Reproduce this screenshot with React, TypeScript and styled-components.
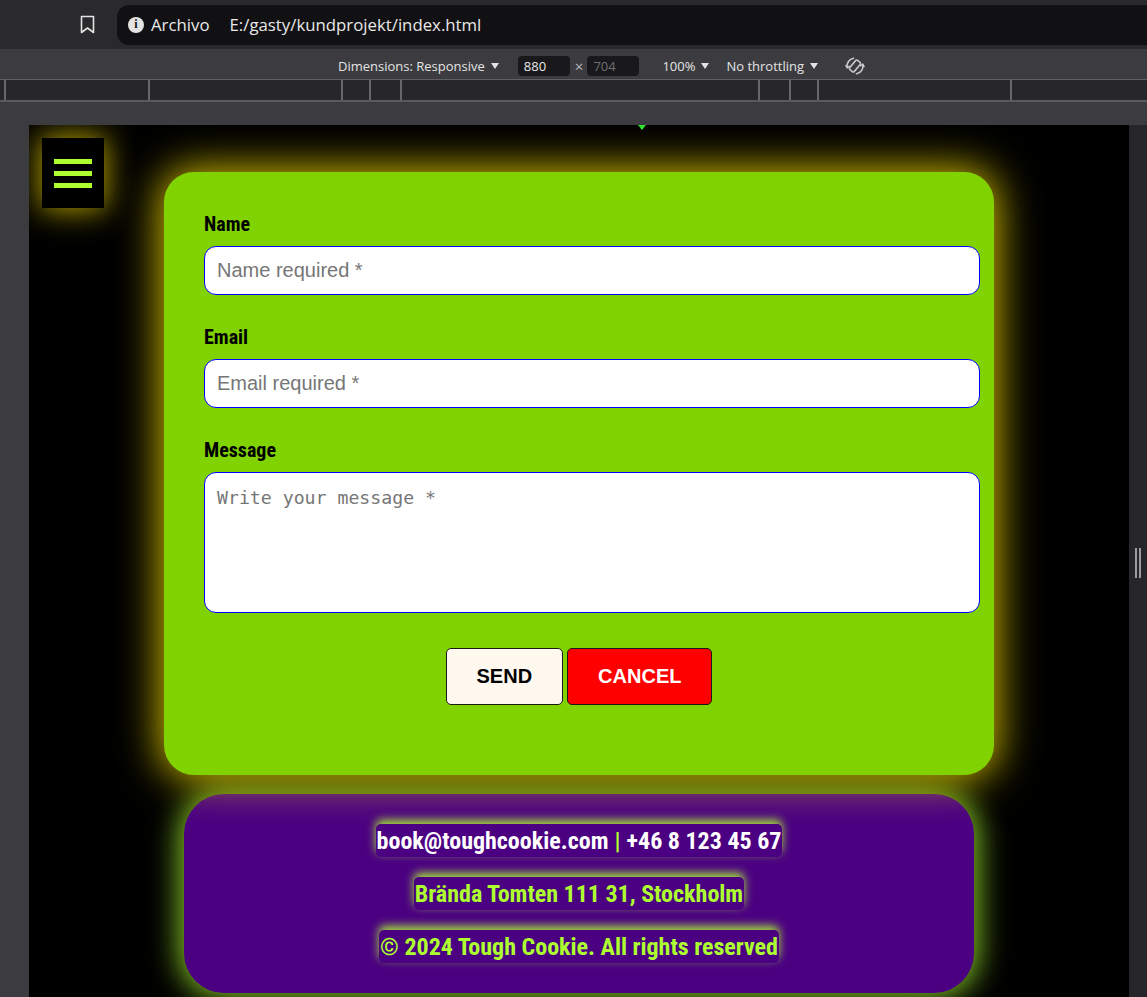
import React from 'react';
import styled, { createGlobalStyle } from 'styled-components';

const GlobalStyle = createGlobalStyle`
  html, body {
    margin: 0;
    padding: 0;
    height: 100%;
    overflow: hidden;
    background: #3c3c40;
  }
  * {
    box-sizing: border-box;
  }
`;

const Shell = styled.div`
  display: flex;
  flex-direction: column;
  height: 100vh;
  font-family: "Open Sans", "Noto Sans", sans-serif;
`;

/* ---------- browser chrome ---------- */

const TopBar = styled.div`
  height: 49px;
  background: #2a2a2d;
  display: flex;
  align-items: center;
  padding-left: 79px;
  gap: 22px;
`;

const IconButton = styled.div`
  width: 16px;
  height: 20px;
  display: flex;
  align-items: center;
  justify-content: center;
  color: #e3e3e3;
`;

const AddressBar = styled.div`
  flex: 1;
  height: 40px;
  background: #111113;
  border-radius: 12px 0 0 12px;
  display: flex;
  align-items: center;
  padding-left: 11px;
  color: #e8e8e8;
  font-size: 16.8px;
`;

const InfoDot = styled.span`
  width: 16px;
  height: 16px;
  border-radius: 50%;
  background: #e3e3e3;
  color: #111113;
  font: bold 12px "Liberation Serif", serif;
  display: inline-flex;
  align-items: center;
  justify-content: center;
  margin-right: 7px;
`;

const Scheme = styled.span`
  margin-right: 20px;
`;

const DevToolbar = styled.div`
  height: 31px;
  background: #3c3c40;
  border-bottom: 1px solid #606064;
  display: flex;
  align-items: center;
  padding-left: 338px;
  padding-top: 3px;
  color: #e3e3e3;
  font-size: 13px;
`;

const ToolText = styled.span<{ $gap?: number; $lead?: number }>`
  display: inline-flex;
  align-items: center;
  gap: 6px;
  margin-left: ${p => p.$lead ?? 0}px;
  margin-right: ${p => p.$gap ?? 0}px;
  white-space: nowrap;
`;

const Caret = styled.span`
  width: 0;
  height: 0;
  border-left: 4.5px solid transparent;
  border-right: 4.5px solid transparent;
  border-top: 6px solid #e3e3e3;
`;

const SizeBox = styled.span<{ $dim?: boolean }>`
  width: 52px;
  height: 20px;
  background: #19191b;
  border-radius: 4px;
  display: inline-flex;
  align-items: center;
  padding-left: 6px;
  color: ${p => (p.$dim ? '#6f6f73' : '#e8e8e8')};
`;

const Times = styled.span`
  color: #b8b8bb;
  font-size: 15px;
  margin: 0 4px 0 5px;
`;

const Ruler = styled.div`
  height: 22px;
  background: #27272b;
  border-bottom: 2px solid #5b5b5f;
  display: flex;
  overflow: hidden;
`;

const RulerSeg = styled.div<{ $w: number; $first?: boolean }>`
  flex: 0 0 ${p => p.$w}px;
  border-left: ${p => (p.$first ? 'none' : '2px solid #68686c')};
`;

const Spacer = styled.div`
  height: 23px;
  background: #3c3c40;
`;

const Workspace = styled.div`
  flex: 1;
  display: flex;
  min-height: 0;
`;

const Gutter = styled.div`
  width: 29px;
  background: #3c3c40;
`;

const SideStrip = styled.div`
  width: 18px;
  background: #26262a;
  display: flex;
  align-items: center;
  justify-content: center;
  gap: 2px;
  padding-bottom: 1px;
`;

const Grip = styled.span`
  width: 2px;
  height: 30px;
  background: #9c9ca0;
  margin-top: 5px;
`;

/* ---------- the page ---------- */

const Viewport = styled.div`
  position: relative;
  width: 1100px;
  background: #000;
  overflow: hidden;
  display: flex;
  flex-direction: column;
  align-items: center;
  padding-top: 47px;
  font-family: "Roboto Condensed", "Roboto", sans-serif;
  font-stretch: 75%;
`;

const QueryMarker = styled.span`
  position: absolute;
  top: 0;
  left: 609px;
  width: 0;
  height: 0;
  border-left: 4px solid transparent;
  border-right: 4px solid transparent;
  border-top: 5px solid #2ee62e;
`;

const MenuButton = styled.button`
  position: absolute;
  top: 13px;
  left: 13px;
  width: 62px;
  height: 70px;
  background: #000;
  border: none;
  box-shadow: 0 0 30px 2px rgba(240, 215, 0, 0.75);
  display: flex;
  flex-direction: column;
  justify-content: center;
  align-items: center;
  gap: 7px;
  padding: 0;
`;

const MenuLine = styled.span`
  width: 38px;
  height: 5px;
  background: #adff2f;
`;

const FormCard = styled.form`
  width: 830px;
  background: #80d300;
  border-radius: 30px;
  padding: 40px 14px 70px 40px;
  box-shadow: 0 0 40px 4px rgba(245, 220, 0, 0.85);
  position: relative;
  z-index: 1;
`;

const Field = styled.div<{ $last?: boolean }>`
  margin-bottom: ${p => (p.$last ? 0 : 30)}px;
`;

const Label = styled.label`
  display: block;
  font-size: 20px;
  font-weight: 700;
  line-height: 24px;
  color: #000;
  margin-bottom: 10px;
`;

const TextInput = styled.input`
  display: block;
  width: 100%;
  height: 49px;
  border: 1px solid #0000ff;
  border-radius: 12px;
  background: #fff;
  padding: 0 12px;
  font: 20px "Liberation Sans", Arial, sans-serif;
  outline: none;

  &::placeholder {
    color: #767676;
  }
`;

const TextArea = styled.textarea`
  display: block;
  width: 100%;
  height: 141px;
  border: 1px solid #0000ff;
  border-radius: 12px;
  background: #fff;
  padding: 14px 12px;
  font: 18.2px "DejaVu Sans Mono", "Liberation Mono", monospace;
  resize: none;
  outline: none;

  &::placeholder {
    color: #767676;
  }
`;

const ButtonRow = styled.div`
  display: flex;
  justify-content: center;
  gap: 4px;
  margin-top: 35px;
  padding-right: 26px;
`;

const ActionButton = styled.button<{ $danger?: boolean }>`
  height: 57px;
  padding: 0 30px;
  border: 1px solid #1a1a1a;
  border-radius: 5px;
  background: ${p => (p.$danger ? '#ff0000' : '#fff8ef')};
  color: ${p => (p.$danger ? '#fff' : '#000')};
  font: bold 20px "Liberation Sans", Arial, sans-serif;
  cursor: pointer;
`;

const Footer = styled.footer`
  width: 790px;
  margin-top: 19px;
  background: #4b0082;
  border-radius: 40px;
  padding: 30px 0 30px;
  box-shadow: 0 0 30px 4px rgba(173, 255, 47, 0.8);
  display: flex;
  flex-direction: column;
  align-items: center;
  gap: 20px;
`;

const FooterLine = styled.span<{ $light?: boolean }>`
  background: #4b0082;
  border-radius: 5px;
  height: 33px;
  padding: 0 1px;
  display: flex;
  align-items: center;
  font-size: 24px;
  font-weight: 700;
  color: ${p => (p.$light ? '#fff' : '#adff2f')};
  box-shadow: 0 -4px 10px rgba(173, 255, 47, 0.9);
`;

const Pipe = styled.span`
  color: #adff2f;
  margin: 0 6px;
`;

const rulerSegments = [4, 144, 193, 28, 31, 358, 31, 28, 193, 200];

export default function App() {
  return (
    <>
      <GlobalStyle />
      <Shell>
        <TopBar>
          <IconButton>
            <svg width="15" height="19" viewBox="0 0 15 19" fill="none" stroke="#e3e3e3" strokeWidth="1.6">
              <path d="M1.5 1.5h12v16l-6-4.5-6 4.5z" strokeLinejoin="round" />
            </svg>
          </IconButton>
          <AddressBar>
            <InfoDot>i</InfoDot>
            <Scheme>Archivo</Scheme>
            <span>E:/gasty/kundprojekt/index.html</span>
          </AddressBar>
        </TopBar>

        <DevToolbar>
          <ToolText $gap={19}>
            Dimensions: Responsive <Caret />
          </ToolText>
          <SizeBox>880</SizeBox>
          <Times>×</Times>
          <SizeBox $dim>704</SizeBox>
          <ToolText $lead={23} $gap={17}>
            100% <Caret />
          </ToolText>
          <ToolText $gap={26}>
            No throttling <Caret />
          </ToolText>
          <svg width="22" height="22" viewBox="0 0 22 22" fill="none" stroke="#c8c8cb" strokeWidth="1.6" strokeLinecap="round">
            <rect x="8" y="5" width="6" height="12" rx="1.5" transform="rotate(40 11 11)" />
            <path d="M3.2 12.5A8 8 0 0 1 9.5 3.2" />
            <path d="M18.8 9.5a8 8 0 0 1-6.3 9.3" />
            <path d="M2 10.5l1.2 2.2 2-1.4" />
            <path d="M20 11.5l-1.2-2.2-2 1.4" />
          </svg>
        </DevToolbar>

        <Ruler>
          {rulerSegments.map((w, i) => (
            <RulerSeg key={i} $w={w} $first={i === 0} />
          ))}
        </Ruler>
        <Spacer />

        <Workspace>
          <Gutter />
          <Viewport>
            <QueryMarker />
            <MenuButton aria-label="Menu">
              <MenuLine />
              <MenuLine />
              <MenuLine />
            </MenuButton>

            <FormCard onSubmit={e => e.preventDefault()}>
              <Field>
                <Label htmlFor="name">Name</Label>
                <TextInput id="name" type="text" placeholder="Name required *" />
              </Field>
              <Field>
                <Label htmlFor="email">Email</Label>
                <TextInput id="email" type="email" placeholder="Email required *" />
              </Field>
              <Field $last>
                <Label htmlFor="message">Message</Label>
                <TextArea id="message" placeholder="Write your message *" />
              </Field>
              <ButtonRow>
                <ActionButton type="submit">SEND</ActionButton>
                <ActionButton type="reset" $danger>CANCEL</ActionButton>
              </ButtonRow>
            </FormCard>

            <Footer>
              <FooterLine $light>
                book@toughcookie.com<Pipe>|</Pipe>+46 8 123 45 67
              </FooterLine>
              <FooterLine>Brända Tomten 111 31, Stockholm</FooterLine>
              <FooterLine>© 2024 Tough Cookie. All rights reserved</FooterLine>
            </Footer>
          </Viewport>
          <SideStrip>
            <Grip />
            <Grip />
          </SideStrip>
        </Workspace>
      </Shell>
    </>
  );
}
